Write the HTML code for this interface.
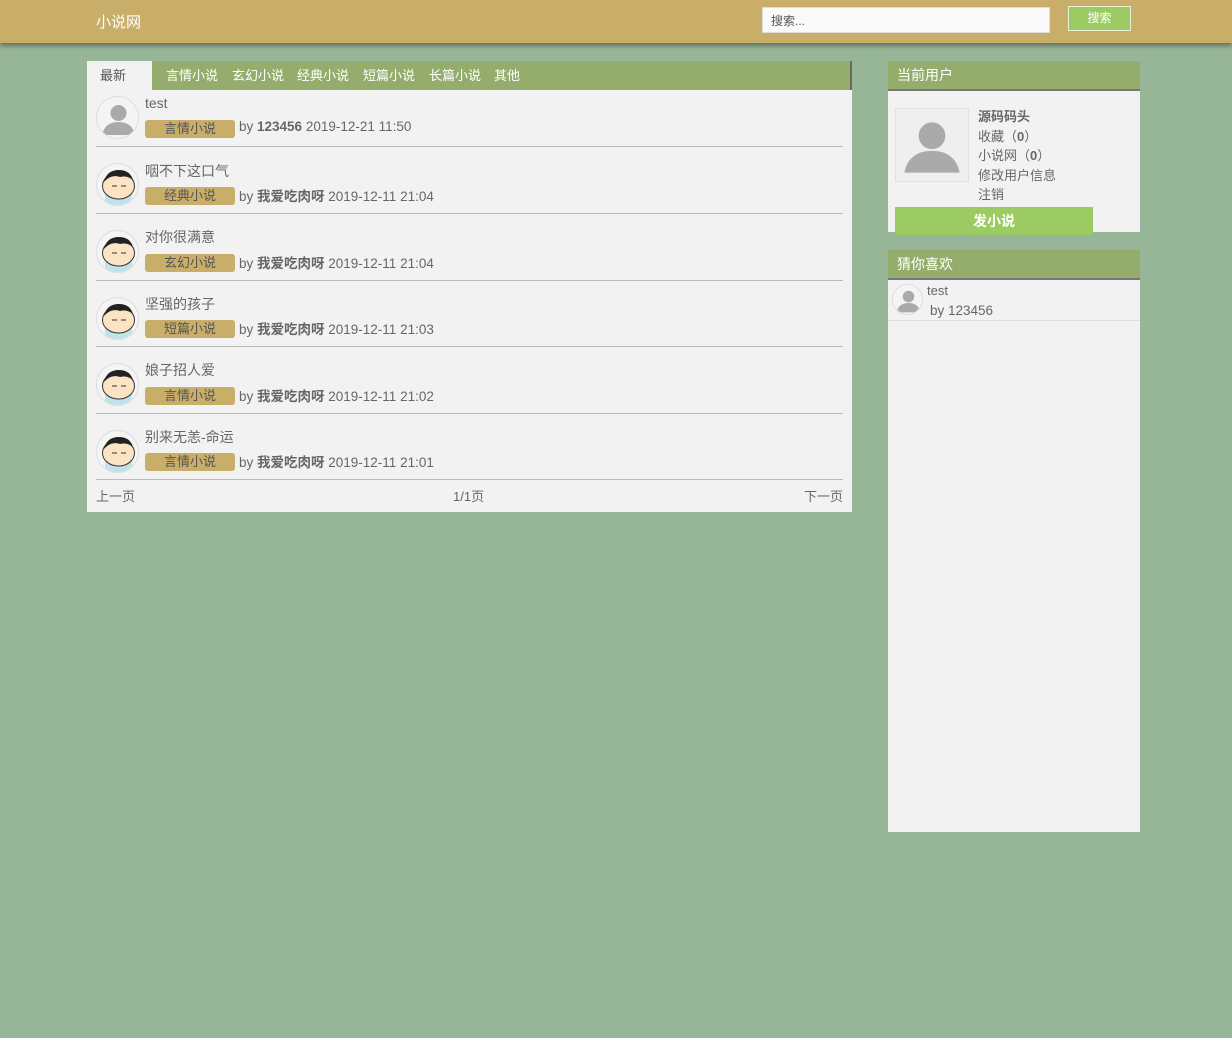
<!DOCTYPE html>
<html><head><meta charset="utf-8"><style>
*{margin:0;padding:0;box-sizing:border-box}
body{width:1232px;height:1038px;background:#97b597;font-family:"Liberation Sans","Microsoft YaHei","Noto Sans CJK SC",sans-serif;font-size:13px;color:#666;position:relative;overflow:hidden}
.hdr{position:absolute;left:0;top:0;width:1232px;height:43px;background:#c9ae6a;box-shadow:0 3px 4px rgba(0,0,0,.35)}
.logo{position:absolute;left:96px;top:11px;color:#fff;font-size:15px}
.srch{position:absolute;left:762px;top:7px;width:288px;height:26px;background:#fafafa;border:1px solid #ddd;font-size:12px;color:#555;padding:4px 8px}
.sbtn{position:absolute;left:1068px;top:6px;width:63px;height:25px;background:#9bcb62;border:1px solid #e8f0d8;color:#fff;font-size:12px;text-align:center;line-height:23px}
.main{position:absolute;left:87px;top:61px;width:765px;height:451px;background:#f2f2f2}
.tabs{height:29px;background:#94ad6d;border-right:2px solid #6b6b5a;position:relative}
.tabs span{position:absolute;top:4px;color:#fff;font-size:13px}
.tabs .act{left:0;top:0;width:65px;height:29px;background:#f2f2f2;color:#555;padding:4px 0 0 13px}
.row{position:absolute;left:9px;width:747px;height:67px;border-bottom:1px solid #bbb}
.av{position:absolute;left:0;top:6px;width:43px;height:43px;border-radius:50%;background:#f4f4f4;border:1px solid #ddd;overflow:hidden}
.t{position:absolute;left:49px;top:5px;font-size:14px;color:#666}
.tag{position:absolute;left:49px;top:30px;width:90px;height:18px;background:#c9ae6a;border-radius:3px;color:#555;text-align:center;line-height:18px;font-size:13px}
.by{position:absolute;left:143px;top:29px;font-size:13.5px;color:#666}
.side{position:absolute;left:888px;width:252px;background:#f2f2f2}
.sh{height:30px;background:#94ad6d;border-bottom:2px solid #777;color:#fff;padding:4px 0 0 9px;font-size:14px}
</style></head><body>
<div class="hdr"><div class="logo">小说网</div><div class="srch">搜索...</div><div class="sbtn">搜索</div></div>
<div class="main">
<div class="tabs"><span class="act">最新</span><span style="left:79px">言情小说</span><span style="left:145px">玄幻小说</span><span style="left:210px">经典小说</span><span style="left:276px">短篇小说</span><span style="left:342px">长篇小说</span><span style="left:407px">其他</span></div>
</div>
<svg width="0" height="0" style="position:absolute"><defs>
<g id="p"><circle cx="21.5" cy="16" r="8" fill="#aaa"/><path d="M5 38c2-10 9-13 16.5-13S36 28 38 38z" fill="#aaa"/></g>
<g id="k"><rect x="8" y="30" width="27" height="13" fill="#bfe3ea"/><ellipse cx="21.5" cy="22" rx="16" ry="13" fill="#fbe3c4" stroke="#333" stroke-width="1"/><path d="M7 18c2-9 8-12 15-12s12 3 14 10c-5-4-9-4-13-3-5-2-11-1-16 5z" fill="#222"/><path d="M15 22h5M24 22h5" stroke="#333" stroke-width="1"/></g>
</defs></svg>
<div style="position:absolute;left:87px;top:90px">
<div class="row" style="top:0;height:57px"><div class="av"><svg width="43" height="43"><use href="#p"/></svg></div><div class="t">test</div><div class="tag">言情小说</div><div class="by">by <b>123456</b> 2019-12-21 11:50</div></div>
<div class="row" style="top:57px;height:67px"><div class="av" style="top:16px"><svg width="43" height="43"><use href="#k"/></svg></div><div class="t" style="top:14px">咽不下这口气</div><div class="tag" style="top:40px">经典小说</div><div class="by" style="top:38px">by <b>我爱吃肉呀</b> 2019-12-11 21:04</div></div>
<div class="row" style="top:124px"><div class="av" style="top:16px"><svg width="43" height="43"><use href="#k"/></svg></div><div class="t" style="top:13px">对你很满意</div><div class="tag" style="top:40px">玄幻小说</div><div class="by" style="top:38px">by <b>我爱吃肉呀</b> 2019-12-11 21:04</div></div>
<div class="row" style="top:191px;height:66px"><div class="av" style="top:16px"><svg width="43" height="43"><use href="#k"/></svg></div><div class="t" style="top:13px">坚强的孩子</div><div class="tag" style="top:39px">短篇小说</div><div class="by" style="top:37px">by <b>我爱吃肉呀</b> 2019-12-11 21:03</div></div>
<div class="row" style="top:257px"><div class="av" style="top:16px"><svg width="43" height="43"><use href="#k"/></svg></div><div class="t" style="top:13px">娘子招人爱</div><div class="tag" style="top:40px">言情小说</div><div class="by" style="top:38px">by <b>我爱吃肉呀</b> 2019-12-11 21:02</div></div>
<div class="row" style="top:324px;height:66px"><div class="av" style="top:16px"><svg width="43" height="43"><use href="#k"/></svg></div><div class="t" style="top:13px">别来无恙-命运</div><div class="tag" style="top:39px">言情小说</div><div class="by" style="top:37px">by <b>我爱吃肉呀</b> 2019-12-11 21:01</div></div>
<div style="position:absolute;left:9px;top:396px;width:747px;font-size:13px;color:#666"><span>上一页</span><span style="position:absolute;left:357px">1/1页</span><span style="position:absolute;right:0">下一页</span></div>
</div>
<div class="side" style="top:61px;height:171px"><div class="sh">当前用户</div>
<div style="position:absolute;left:7px;top:47px;width:74px;height:74px;background:#efefef;border:1px solid #e2e2e2"><svg width="72" height="72" viewBox="0 0 43 43"><use href="#p"/></svg></div>
<div style="position:absolute;left:90px;top:46px;line-height:19.5px;font-size:13px;color:#666"><b>源码码头</b><br>收藏（<b>0</b>）<br>小说网（<b>0</b>）<br>修改用户信息<br>注销</div>
<div style="position:absolute;left:7px;top:146px;width:198px;height:28px;background:#9bcb62;color:#fff;font-weight:bold;text-align:center;line-height:28px;font-size:14px">发小说</div>
</div>
<div class="side" style="top:250px;height:582px"><div class="sh">猜你喜欢</div>
<div style="position:absolute;left:0;top:30px;width:252px;height:41px;border-bottom:1px solid #ddd">
<div class="av" style="left:4px;top:4px;width:31px;height:31px"><svg width="31" height="31" viewBox="0 0 43 43"><use href="#p"/></svg></div>
<div style="position:absolute;left:39px;top:3px;font-size:13px">test</div><div style="position:absolute;left:42px;top:23px;font-size:13.5px">by 123456</div></div>
</div>
</body></html>
